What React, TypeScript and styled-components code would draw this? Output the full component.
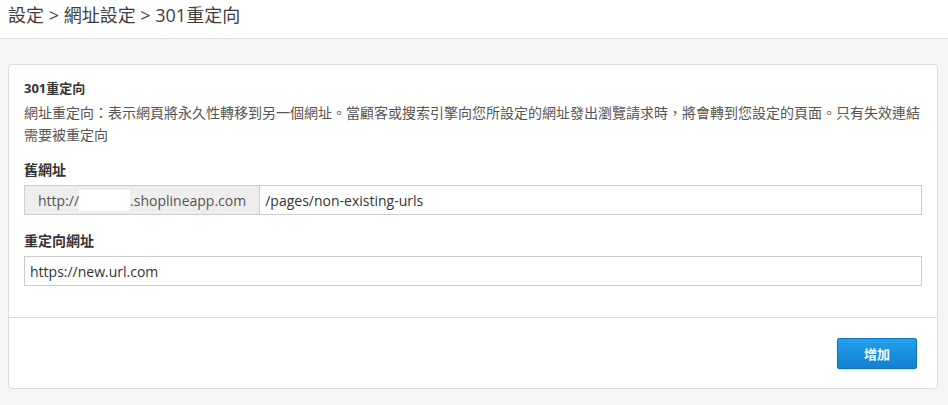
import React from "react";
import styled, { createGlobalStyle } from "styled-components";

const GlobalStyle = createGlobalStyle`
  html, body {
    margin: 0;
    padding: 0;
    background: #f5f5f5;
  }

  body {
    font-family: "Open Sans", "Noto Sans CJK TC", sans-serif;
    color: #333;
  }

  * {
    box-sizing: border-box;
  }
`;

const Page = styled.div`
  min-height: 405px;
  background: #f5f5f5;
`;

const Header = styled.div`
  height: 39px;
  padding: 3px 8px 0;
  background: #fff;
  border-bottom: 1px solid #dedede;
  font-size: 18px;
  line-height: 24px;
  color: #3d3d3d;
`;

const Content = styled.div`
  padding: 25px 10px 16px 8px;
`;

const Card = styled.div`
  background: #fff;
  border: 1px solid #dcdcdc;
  border-radius: 4px;
`;

const CardBody = styled.div`
  padding: 13px 15px 31px;
`;

const Title = styled.div`
  font-size: 13px;
  line-height: 20px;
  font-weight: 700;
  color: #333;
`;

const Description = styled.p`
  margin: 4px 0 0;
  font-size: 14px;
  line-height: 22px;
  color: #555;
`;

const Field = styled.div<{ $first?: boolean }>`
  margin-top: ${(p) => (p.$first ? "14px" : "16px")};
`;

const Label = styled.div`
  font-size: 14px;
  line-height: 20px;
  font-weight: 600;
  color: #333;
  margin-bottom: 5px;
`;

const InputGroup = styled.div`
  display: flex;
  height: 30px;
`;

const Addon = styled.div`
  display: flex;
  align-items: center;
  padding: 0 13px;
  background: #eee;
  border: 1px solid #ccc;
  border-right: none;
  font-size: 14px;
  color: #555;
  white-space: nowrap;
`;

const Redacted = styled.span`
  display: inline-block;
  width: 51px;
  height: 21px;
  background: #fff;
`;

const TextInput = styled.input`
  flex: 1;
  min-width: 0;
  height: 30px;
  padding: 0 5px;
  border: 1px solid #ccc;
  border-radius: 0;
  outline: none;
  font-family: "Open Sans", "Noto Sans CJK TC", sans-serif;
  font-size: 14px;
  color: #333;
  background: #fff;
`;

const CardFooter = styled.div`
  display: flex;
  justify-content: flex-end;
  padding: 20px 20px 19px;
  border-top: 1px solid #dcdcdc;
`;

const PrimaryButton = styled.button`
  width: 80px;
  height: 31px;
  border: 1px solid #1273bf;
  border-radius: 2px;
  background: linear-gradient(to bottom, #21a0ee, #1480d0);
  box-shadow: 0 1px 2px rgba(0, 0, 0, 0.15);
  color: #fff;
  font-family: "Open Sans", "Noto Sans CJK TC", sans-serif;
  font-size: 13px;
  font-weight: 700;
  cursor: pointer;
`;

export default function App() {
  return (
    <>
      <GlobalStyle />
      <Page>
        <Header>設定 &gt; 網址設定 &gt; 301重定向</Header>
        <Content>
          <Card>
            <CardBody>
              <Title>301重定向</Title>
              <Description>
                網址重定向：表示網頁將永久性轉移到另一個網址。當顧客或搜索引擎向您所設定的網址發出瀏覽請求時，將會轉到您設定的頁面。只有失效連結需要被重定向
              </Description>
              <Field $first>
                <Label>舊網址</Label>
                <InputGroup>
                  <Addon>
                    http://
                    <Redacted />
                    .shoplineapp.com
                  </Addon>
                  <TextInput defaultValue="/pages/non-existing-urls" />
                </InputGroup>
              </Field>
              <Field>
                <Label>重定向網址</Label>
                <InputGroup>
                  <TextInput defaultValue="https://new.url.com" />
                </InputGroup>
              </Field>
            </CardBody>
            <CardFooter>
              <PrimaryButton>增加</PrimaryButton>
            </CardFooter>
          </Card>
        </Content>
      </Page>
    </>
  );
}
